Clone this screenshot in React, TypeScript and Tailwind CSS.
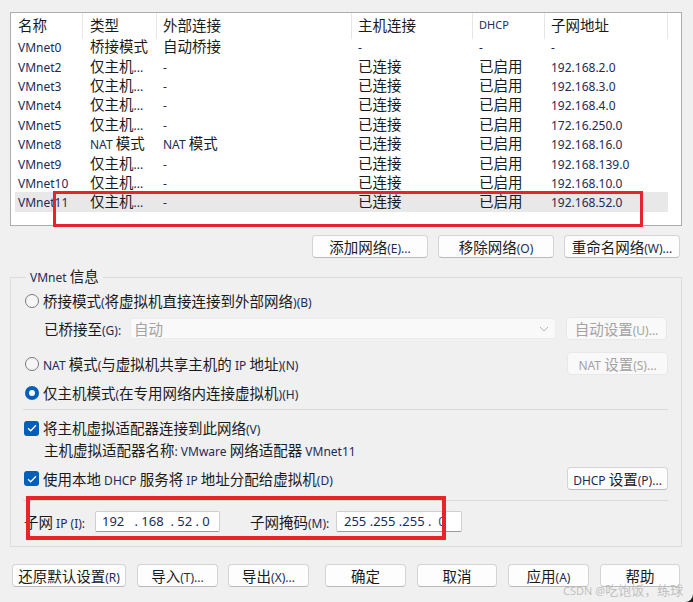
import React from "react";
import clsx from "clsx";

const CJK = /([\u3000-\u303f\u3400-\u9fff\uff00-\uffef]+)/;

// mixes the CJK glyphs (wider) with smaller latin runs, like the Windows dialog font
function Txt({ s, muted = false }: { s: string; muted?: boolean }) {
  return (
    <span className="whitespace-nowrap">
      {s.split(CJK).map((part, i) =>
        !part ? null : CJK.test(part) ? (
          <span key={i} className="text-[14.5px]">
            {part}
          </span>
        ) : (
          <span
            key={i}
            className={clsx("text-[12px] whitespace-pre", !muted && "text-[#1d2b55]")}
          >
            {part}
          </span>
        ),
      )}
    </span>
  );
}

function Btn({
  label,
  className,
  disabled = false,
}: {
  label: string;
  className?: string;
  disabled?: boolean;
}) {
  return (
    <button
      type="button"
      className={clsx(
        "h-[23px] shrink-0 rounded-[4px] border flex items-center justify-center leading-none",
        disabled
          ? "border-[#e8e8e8] bg-[#f9f9f9] text-[#a3a3a3]"
          : "border-[#d4d4d4] border-b-[#bababa] bg-[#fdfdfd] text-[#1a1a1a]",
        className,
      )}
    >
      <Txt s={label} muted={disabled} />
    </button>
  );
}

function Radio({ checked = false }: { checked?: boolean }) {
  return checked ? (
    <span className="ml-[2px] w-[14px] h-[14px] rounded-full bg-[#005fb8] flex items-center justify-center shrink-0">
      <span className="w-[6px] h-[6px] rounded-full bg-white" />
    </span>
  ) : (
    <span className="ml-[2px] w-[14px] h-[14px] rounded-full border border-[#7a7a7a] bg-[#f6f6f6] shrink-0" />
  );
}

function Check() {
  return (
    <span className="ml-[1px] w-[15px] h-[15px] rounded-[3px] bg-[#005fb8] flex items-center justify-center shrink-0">
      <svg width="10" height="8" viewBox="0 0 10 8" fill="none">
        <path d="M1 4.2 L3.7 6.8 L9 1.2" stroke="white" strokeWidth="1.3" />
      </svg>
    </span>
  );
}

const rows = [
  ["VMnet0", "桥接模式", "自动桥接", "-", "-", "-"],
  ["VMnet2", "仅主机...", "-", "已连接", "已启用", "192.168.2.0"],
  ["VMnet3", "仅主机...", "-", "已连接", "已启用", "192.168.3.0"],
  ["VMnet4", "仅主机...", "-", "已连接", "已启用", "192.168.4.0"],
  ["VMnet5", "仅主机...", "-", "已连接", "已启用", "172.16.250.0"],
  ["VMnet8", "NAT 模式", "NAT 模式", "已连接", "已启用", "192.168.16.0"],
  ["VMnet9", "仅主机...", "-", "已连接", "已启用", "192.168.139.0"],
  ["VMnet10", "仅主机...", "-", "已连接", "已启用", "192.168.10.0"],
  ["VMnet11", "仅主机...", "-", "已连接", "已启用", "192.168.52.0"],
];

const headers = ["名称", "类型", "外部连接", "主机连接", "DHCP", "子网地址"];

export default function App() {
  return (
    <div className="w-[693px] h-[602px] bg-[#1e1e1e] font-['Noto_Sans','Noto_Sans_CJK_SC',sans-serif] text-[#1a1a1a] [text-autospace:no-autospace]">
      <div className="relative w-full h-full bg-[#f0f0f0] rounded-br-[8px] overflow-hidden flex flex-col">
        {/* network list */}
        <div className="ml-[10px] mt-[12px] w-[672px] h-[214px] shrink-0 border border-[#adadad] bg-white">
          <div className="grid grid-cols-[72px_74px_195px_121px_72px_123px] h-[24px]">
            {headers.map((h, i) => (
              <div
                key={h}
                className={clsx(
                  "flex items-center pb-[2px] border-r border-[#e6e6e6]",
                  i < 2 ? "pl-[7px]" : "pl-[6px]",
                )}
              >
                {h === "DHCP" ? (
                  <span className="text-[11px] text-[#1d2b55]">DHCP</span>
                ) : (
                  <Txt s={h} />
                )}
              </div>
            ))}
          </div>
          {rows.map((r) => (
            <div
              key={r[0]}
              className={clsx(
                "ml-[4px] w-[653px] h-[19.4px] grid grid-cols-[68px_74px_195px_121px_72px_123px] leading-none",
                r[0] === "VMnet11" && "bg-[#e8e8e8]",
              )}
            >
              {r.map((c, i) => (
                <div
                  key={i}
                  className={clsx(
                    "flex items-center pb-[1px]",
                    i === 0 ? "pl-[3px]" : i === 1 ? "pl-[7px]" : "pl-[6px]",
                  )}
                >
                  <Txt s={c} />
                </div>
              ))}
            </div>
          ))}
        </div>

        <div className="mt-[9px] pr-[13px] flex justify-end gap-[10px]">
          <Btn label="添加网络(E)..." className="w-[116px]" />
          <Btn label="移除网络(O)" className="w-[116px]" />
          <Btn label="重命名网络(W)..." className="w-[116px]" />
        </div>

        {/* VMnet info group */}
        <fieldset className="ml-[10px] mt-[9px] w-[672px] border border-[#dcdcdc] pl-[12px] pr-[13px] pb-[14px]">
          <legend className="ml-[3px] px-[4px] leading-[18px]">
            <Txt s="VMnet 信息" />
          </legend>

          <div className="mt-[4px] h-[20px] flex items-center gap-[4px]">
            <Radio />
            <Txt s="桥接模式(将虚拟机直接连接到外部网络)(B)" />
          </div>

          <div className="mt-[7px] h-[21px] flex items-center">
            <div className="pl-[21px] w-[107px] shrink-0">
              <Txt s="已桥接至(G):" />
            </div>
            <div className="w-[426px] h-[21px] bg-[#f9f9f9] border border-[#ececec] rounded-[3px] flex items-center justify-between pl-[3px] pr-[6px] text-[#a3a3a3]">
              <Txt s="自动" muted />
              <svg width="10" height="6" viewBox="0 0 10 6" fill="none">
                <path d="M1 1 L5 5 L9 1" stroke="#b5b5b5" strokeWidth="1" />
              </svg>
            </div>
            <Btn label="自动设置(U)..." disabled className="ml-[10px] w-[101px]" />
          </div>

          <div className="mt-[13px] h-[23px] flex items-center">
            <div className="flex items-center gap-[4px]">
              <Radio />
              <Txt s="NAT 模式(与虚拟机共享主机的 IP 地址)(N)" />
            </div>
            <Btn label="NAT 设置(S)..." disabled className="ml-auto w-[101px]" />
          </div>

          <div className="mt-[8px] h-[20px] flex items-center gap-[4px]">
            <Radio checked />
            <Txt s="仅主机模式(在专用网络内连接虚拟机)(H)" />
          </div>

          <div className="mt-[6px] h-px bg-[#d9d9d9]" />

          <div className="mt-[8px] h-[20px] flex items-center gap-[4px]">
            <Check />
            <Txt s="将主机虚拟适配器连接到此网络(V)" />
          </div>

          <div className="mt-[2px] h-[20px] flex items-center pl-[21px]">
            <Txt s="主机虚拟适配器名称: VMware 网络适配器 VMnet11" />
          </div>

          <div className="mt-[7px] h-[23px] flex items-center">
            <div className="flex items-center gap-[4px]">
              <Check />
              <Txt s="使用本地 DHCP 服务将 IP 地址分配给虚拟机(D)" />
            </div>
            <Btn label="DHCP 设置(P)..." className="ml-auto w-[101px]" />
          </div>

          <div className="mt-[10px] h-px bg-[#d9d9d9]" />

          <div className="mt-[10px] h-[21px] flex items-center">
            <div className="pl-[1px] w-[72px] shrink-0">
              <Txt s="子网 IP (I):" />
            </div>
            <div className="w-[125px] h-[21px] bg-white border border-[#cfcfcf] border-b-[#9a9a9a] rounded-[2px] flex items-center pl-[6px] text-[13px] text-[#1d2b55] whitespace-pre">
              {"192   . 168  . 52 . 0"}
            </div>
            <div className="ml-[30px] w-[86px] shrink-0">
              <Txt s="子网掩码(M):" />
            </div>
            <div className="w-[126px] h-[21px] bg-white border border-[#cfcfcf] border-b-[#9a9a9a] rounded-[2px] flex items-center pl-[7px] text-[13px] text-[#1d2b55] whitespace-pre">
              {"255 .255 .255 .  "}
              <span className="text-[#1f4fa8]">0</span>
            </div>
          </div>
        </fieldset>

        <div className="mt-[17px] pl-[12px] flex">
          <Btn label="还原默认设置(R)" className="w-[114px]" />
          <Btn label="导入(T)..." className="ml-[11px] w-[81px]" />
          <Btn label="导出(X)..." className="ml-[10px] w-[81px]" />
          <Btn label="确定" className="ml-[16px] w-[81px]" />
          <Btn label="取消" className="ml-[11px] w-[80px]" />
          <Btn label="应用(A)" className="ml-[11px] w-[81px]" />
          <Btn label="帮助" className="ml-[11px] w-[80px]" />
        </div>

        {/* red annotation boxes */}
        <div className="absolute left-[53px] top-[191px] w-[590px] h-[36px] border-[3px] border-[#e8232b]" />
        <div className="absolute left-[26px] top-[496px] w-[420px] h-[44px] border-[4px] border-[#e8232b]" />

        {/* watermark */}
        <div className="absolute left-[563px] top-[581px] text-[#b9b9b9]/90 leading-none whitespace-nowrap">
          <span className="text-[11px]">CSDN @</span>
          <span className="text-[13px]">吃饱饭，练球</span>
        </div>
      </div>
    </div>
  );
}
